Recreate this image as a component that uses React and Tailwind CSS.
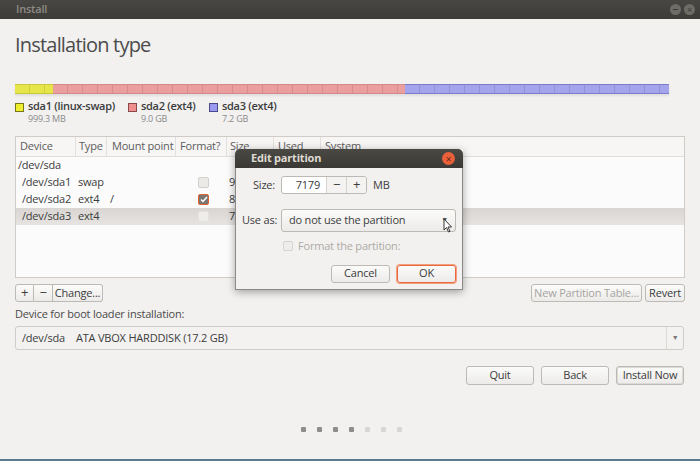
import React from 'react';

const font = "font-['Open_Sans','Noto_Sans',sans-serif]";

// legend entries under the partition bar
const legend = [
  { name: 'sda1 (linux-swap)', size: '999.3 MB', swatch: 'bg-[#eeee2c] border-[#77771a]', w: 'w-[113px]' },
  { name: 'sda2 (ext4)', size: '9.0 GB', swatch: 'bg-[#ef8f8f] border-[#8a4a4a]', w: 'w-[81px]' },
  { name: 'sda3 (ext4)', size: '7.2 GB', swatch: 'bg-[#9a9af0] border-[#4a4a8a]', w: 'w-[90px]' },
];

const rows = [
  { dev: '/dev/sda1', type: 'swap', mount: '', fmt: 'off', size: '999 MB' },
  { dev: '/dev/sda2', type: 'ext4', mount: '/', fmt: 'on', size: '8999 MB' },
  { dev: '/dev/sda3', type: 'ext4', mount: '', fmt: 'faint', size: '7179 MB', selected: true },
];

const Btn = ({ children, className = '' }) => (
  <div
    className={`flex items-center justify-center whitespace-nowrap rounded-[3px] border border-[#bdbab5] bg-gradient-to-b from-[#fbfbfa] to-[#ecebe9] text-[11px] text-[#3c3c3c] ${className}`}
  >
    {children}
  </div>
);

const Check = ({ state }) => {
  if (state === 'on')
    return (
      <div className="flex h-[11px] w-[11px] items-center justify-center rounded-[2px] border border-[#e0622e] bg-[#7a7672]">
        <svg width="8" height="7" viewBox="0 0 8 7">
          <path d="M1 3.5 L3 5.5 L7 1" stroke="#fff" strokeWidth="1.4" fill="none" />
        </svg>
      </div>
    );
  return (
    <div
      className={`h-[11px] w-[11px] rounded-[2px] border ${
        state === 'faint' ? 'border-[#e4e2df] bg-[#efedeb]' : 'border-[#d2d0cc] bg-[#eceae7]'
      }`}
    />
  );
};

const Bar = ({ className }) => (
  <div
    className={`h-full border-y bg-[image:repeating-linear-gradient(90deg,transparent_0_14px,rgba(0,0,0,0.1)_14px_15px)] ${className}`}
  />
);

const EditPartition = () => (
  <div className="absolute left-[235px] top-[149px] w-[228px] shadow-[0_2px_8px_rgba(0,0,0,0.35)]">
    <div className="flex h-[19px] items-center justify-between rounded-t-[5px] bg-gradient-to-b from-[#4a4944] to-[#3a3935] pl-4 pr-[8px]">
      <span className="text-[11px] font-bold text-[#dfdbd2]">Edit partition</span>
      <div className="flex h-[13px] w-[13px] items-center justify-center rounded-full bg-[#e9603a] text-[10px] leading-none text-[#6a2a14]">
        ×
      </div>
    </div>
    <div className="flex h-[122px] flex-col border-x border-b border-[#8c8a86] bg-[#f2f1f0] px-[6px]">
      <div className="mt-[8px] flex items-center">
        <span className="ml-[11px] w-[28px] text-[11px] text-[#3c3c3c]">Size:</span>
        <div className="flex h-[18px] w-[86px] items-center rounded-[3px] border border-[#bdbab5] bg-white text-[11px] text-[#3c3c3c]">
          <span className="flex-1 pr-[6px] text-right">7179</span>
          <span className="flex h-full w-[20px] items-center justify-center border-l border-[#d6d3cf] bg-[#f4f3f1] text-[13px]">−</span>
          <span className="flex h-full w-[20px] items-center justify-center rounded-r-[3px] border-l border-[#d6d3cf] bg-[#f4f3f1] text-[13px]">+</span>
        </div>
        <span className="ml-[6px] text-[11px] text-[#3c3c3c]">MB</span>
      </div>
      <div className="mt-[15px] flex items-center">
        <span className="w-[39px] whitespace-nowrap text-[11px] text-[#3c3c3c]">Use as:</span>
        <div className="flex h-[23px] w-[175px] items-center justify-between rounded-[3px] border border-[#bdbab5] bg-gradient-to-b from-[#fbfbfa] to-[#ecebe9] pl-[7px] pr-[7px] text-[11px] text-[#3c3c3c]">
          <span className="whitespace-nowrap">do not use the partition</span>
          <span className="relative text-[7px] text-[#555]">
            ▼
            <svg className="absolute left-[2px] top-[3px]" width="10" height="15" viewBox="0 0 10 15">
              <path d="M1 1 L1 12 L3.5 9.5 L5.5 14 L7 13.3 L5 9 L8.5 9 Z" fill="#fff" stroke="#222" strokeWidth="0.9" />
            </svg>
          </span>
        </div>
      </div>
      <div className="mt-[6px] ml-[41px] flex items-center gap-[5px]">
        <div className="h-[10px] w-[10px] rounded-[2px] border border-[#d6d4d0] bg-[#efedeb]" />
        <span className="whitespace-nowrap text-[11px] text-[#aeaaa4]">Format the partition:</span>
      </div>
      <div className="mt-[10px] flex justify-end gap-[7px]">
        <Btn className="h-[18px] w-[59px]">Cancel</Btn>
        <Btn className="h-[18px] w-[59px] border-[#e9683d] shadow-[0_0_0_1px_#f3a080]">OK</Btn>
      </div>
    </div>
  </div>
);

export default function App() {
  return (
    <div className={`relative flex h-[461px] w-[700px] flex-col overflow-hidden bg-[#f2f1f0] tracking-[-0.2px] ${font}`}>
      {/* window title bar */}
      <div className="flex h-[19px] shrink-0 items-center justify-between bg-gradient-to-b from-[#484743] to-[#3c3b37] pl-4 pr-[5px]">
        <span className="text-[11px] font-semibold text-[#8e8b85]">Install</span>
        <div className="flex gap-[3px]">
          <div className="flex h-[11px] w-[11px] items-center justify-center rounded-full bg-[#6e6c67]">
            <div className="h-[1.5px] w-[5px] bg-[#3c3b37]" />
          </div>
          <div className="flex h-[11px] w-[11px] items-center justify-center rounded-full bg-[#6e6c67] text-[9px] leading-none text-[#3c3b37]">
            ×
          </div>
        </div>
      </div>

      <div className="flex flex-1 flex-col border-b-2 border-[#5a7a92] px-[15px]">
        <h1 className="mt-[14px] text-[20px] leading-[24px] tracking-[-0.8px] text-[#4c4c4c]">Installation type</h1>

        {/* partition bar */}
        <div className="mt-[27px] flex h-[10px] w-[654px] shadow-[0_2px_2px_rgba(0,0,0,0.08)]">
          <Bar className="w-[38px] border-[#c9c93a] bg-[#e6e64a]" />
          <Bar className="w-[352px] border-[#d48a8a] bg-[#eb9e9e]" />
          <Bar className="flex-1 border-[#7c7ccc] bg-[#a4a4ec]" />
        </div>

        {/* legend */}
        <div className="mt-[5px] flex">
          {legend.map((l) => (
            <div key={l.name} className={`flex gap-[4px] ${l.w}`}>
              <div className={`mt-[4px] h-[9px] w-[9px] shrink-0 border ${l.swatch}`} />
              <div className="flex flex-col">
                <span className="whitespace-nowrap text-[11px] font-semibold leading-[14px] tracking-[-0.3px] text-[#3c3c3c]">{l.name}</span>
                <span className="text-[9px] leading-[11px] text-[#8a8a8a]">{l.size}</span>
              </div>
            </div>
          ))}
        </div>

        {/* partition table */}
        <div className="mt-[12px] h-[142px] w-[670px] shrink-0 border border-[#cfccc8] bg-[#fbfbfb] text-[11px]">
          <div className="flex h-[20px] whitespace-nowrap border-b border-[#e0ddda] bg-[#f7f6f5] text-[#5c5c5c]">
            <div className="flex w-[60px] items-center border-r border-[#e3e0dd] pl-[4px]">Device</div>
            <div className="flex w-[31px] items-center border-r border-[#e3e0dd] pl-[3px]">Type</div>
            <div className="flex w-[69px] items-center border-r border-[#e3e0dd] pl-[5px]">Mount point</div>
            <div className="flex w-[51px] items-center border-r border-[#e3e0dd] pl-[4px]">Format?</div>
            <div className="flex w-[47px] items-center border-r border-[#e3e0dd] pl-[3px]">Size</div>
            <div className="flex w-[47px] items-center border-r border-[#e3e0dd] pl-[4px]">Used</div>
            <div className="flex flex-1 items-center pl-[4px]">System</div>
          </div>
          <div className="flex h-[17px] items-center pl-[2px] text-[#3c3c3c]">/dev/sda</div>
          {rows.map((r) => (
            <div
              key={r.dev}
              className={`flex h-[17px] items-center whitespace-nowrap text-[#3c3c3c] ${
                r.selected ? 'bg-gradient-to-b from-[#d8d5d2] to-[#e6e3e0]' : ''
              }`}
            >
              <div className="w-[60px] pl-[6px]">{r.dev}</div>
              <div className="w-[31px] pl-[2px]">{r.type}</div>
              <div className="w-[69px] pl-[3px]">{r.mount}</div>
              <div className="flex w-[51px] justify-center pl-[4px]">
                <Check state={r.fmt} />
              </div>
              <div className="w-[47px] pl-[2px]">{r.size}</div>
            </div>
          ))}
        </div>

        {/* table actions */}
        <div className="mt-[6px] flex items-center justify-between">
          <div className="flex">
            <Btn className="h-[18px] w-[19px] rounded-r-none text-[13px]">+</Btn>
            <Btn className="h-[18px] w-[19px] rounded-none border-l-0 text-[13px]">−</Btn>
            <Btn className="h-[18px] w-[50px] rounded-l-none border-l-0">Change...</Btn>
          </div>
          <div className="flex gap-[3px]">
            <Btn className="h-[18px] w-[111px] text-[#a7a49f]">New Partition Table...</Btn>
            <Btn className="h-[18px] w-[40px]">Revert</Btn>
          </div>
        </div>

        <div className="mt-[5px] whitespace-nowrap text-[11px] leading-[14px] text-[#4a4a4a]">
          Device for boot loader installation:
        </div>
        <div className="mt-[5px] flex h-[24px] w-[669px] items-center justify-between rounded-[3px] border border-[#cfccc8] bg-[#f3f2f1] pl-[6px] text-[11px] text-[#3c3c3c]">
          <span className="whitespace-nowrap">
            /dev/sda<span className="ml-[11px]">ATA VBOX HARDDISK (17.2 GB)</span>
          </span>
          <span className="flex h-full w-[17px] items-center justify-center border-l border-[#dcd9d5] text-[7px] text-[#777]">
            ▼
          </span>
        </div>

        {/* navigation */}
        <div className="mt-[16px] flex justify-end gap-[7px] pr-[1px]">
          <Btn className="h-[19px] w-[68px]">Quit</Btn>
          <Btn className="h-[19px] w-[68px]">Back</Btn>
          <Btn className="h-[19px] w-[68px] border-[#8c8a86] shadow-[inset_0_0_0_1px_#dcdad6]">Install Now</Btn>
        </div>

        {/* progress dots */}
        <div className="mt-[42px] flex justify-center gap-[11px] pl-[2px]">
          {[1, 1, 1, 1, 0, 0, 0].map((on, i) => (
            <div
              key={i}
              className={`h-[5px] w-[5px] rounded-[1px] ${on ? 'bg-[#8f8d8a]' : 'bg-[#d8d6d3]'}`}
            />
          ))}
        </div>
      </div>

      <EditPartition />
    </div>
  );
}
